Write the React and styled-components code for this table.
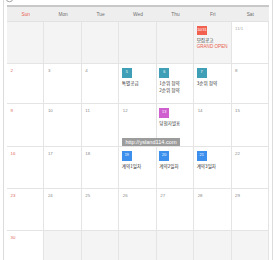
import React from "react";
import styled, { createGlobalStyle } from "styled-components";

const GlobalStyle = createGlobalStyle`
  html, body { margin: 0; padding: 0; background: #ffffff; }
  body {
    font-family: "Liberation Sans", "Noto Sans CJK KR", sans-serif;
    -webkit-font-smoothing: antialiased;
  }
  #root { width: 276px; height: 260px; overflow: hidden; }
`;

const Frame = styled.div`
  margin-left: 3px;
  width: 262px;
  height: 260px;
  padding: 0 3px;
  border-left: 1px solid #dcdcdc;
  border-right: 1px solid #dcdcdc;
`;

const TopBar = styled.div`
  height: 5px;
  display: flex;
  align-items: flex-start;
  overflow: visible;
`;

const Spinner = styled.svg`
  margin-left: -2px;
  margin-top: -6px;
  flex: none;
`;

const Calendar = styled.div`
  position: relative;
  border-top: 2px solid #c8c8c8;
`;

const HeadRow = styled.div`
  display: grid;
  grid-template-columns: repeat(7, 1fr);
  height: 14px;
  background: #eeeeee;
  border-bottom: 1px solid #e2e2e2;
`;

const HeadCell = styled.div`
  display: flex;
  align-items: center;
  justify-content: center;
  font-size: 4.8px;
  color: ${(p) => (p.$sun ? "#e8624f" : "#6f6f6f")};
`;

const Week = styled.div`
  display: grid;
  grid-template-columns: repeat(7, 1fr);
  height: ${(p) => p.$h}px;
  box-sizing: border-box;
  border-bottom: 1px solid #e4e4e4;
`;

const Cell = styled.div`
  box-sizing: border-box;
  padding: 4px 2.5px 0;
  border-right: 1px solid #e4e4e4;
  background: ${(p) => (p.$muted ? "#f4f4f4" : "#ffffff")};
  display: flex;
  flex-direction: column;
  align-items: flex-start;
  min-width: 0;
`;

const DateNum = styled.div`
  margin-left: 1px;
  font-size: 4.4px;
  line-height: 6px;
  color: ${(p) => (p.$sun ? "#e06a5c" : p.$faint ? "#a9a9a9" : "#888888")};
`;

const Badge = styled.div`
  min-width: 10px;
  height: ${(p) => (p.$small ? 9 : 10)}px;
  padding: 0 0.5px;
  box-sizing: border-box;
  display: flex;
  align-items: center;
  justify-content: center;
  background: ${(p) => p.$color};
  color: #ffffff;
  font-size: 3.8px;
  line-height: 1;
  white-space: nowrap;
`;

const Events = styled.div`
  margin-top: 2px;
  display: flex;
  flex-direction: column;
`;

const EventLine = styled.div`
  font-size: 4.6px;
  line-height: 6.5px;
  white-space: nowrap;
  color: ${(p) => (p.$accent ? "#e8604e" : "#333333")};
  font-family: ${(p) =>
    p.$accent
      ? '"Liberation Sans", sans-serif'
      : '"Noto Sans CJK KR", "Liberation Sans", sans-serif'};
`;

const Watermark = styled.div`
  position: absolute;
  left: 115px;
  top: 131px;
  width: 58px;
  height: 8px;
  background: #9c9c9c;
  color: #ffffff;
  font-size: 5.6px;
  line-height: 8px;
  text-align: center;
  white-space: nowrap;
  overflow: hidden;
`;

const TEAL = "#3f9fb6";
const MAGENTA = "#cf5fcf";
const BLUE = "#3d8fee";
const RED = "#f2604f";

const heads = ["Sun", "Mon", "Tue", "Wed", "Thu", "Fri", "Sat"];

const weeks = [
  {
    h: 42,
    days: [
      { muted: true },
      { muted: true },
      { muted: true },
      { muted: true },
      { muted: true },
      {
        muted: true,
        badge: { label: "10/31", color: RED, small: true },
        events: [{ t: "모집공고" }, { t: "GRAND OPEN", accent: true }],
      },
      { label: "11/1", faint: true },
    ],
  },
  {
    h: 40,
    days: [
      { label: "2" },
      { label: "3" },
      { label: "4" },
      { badge: { label: "5", color: TEAL }, events: [{ t: "특별공급" }] },
      {
        badge: { label: "6", color: TEAL },
        events: [{ t: "1순위 청약" }, { t: "2순위 청약" }],
      },
      { badge: { label: "7", color: TEAL }, events: [{ t: "3순위 청약" }] },
      { label: "8" },
    ],
  },
  {
    h: 43,
    days: [
      { label: "9" },
      { label: "10" },
      { label: "11" },
      { label: "12" },
      { badge: { label: "13", color: MAGENTA }, events: [{ t: "당첨자발표" }] },
      { label: "14" },
      { label: "15" },
    ],
  },
  {
    h: 42,
    days: [
      { label: "16" },
      { label: "17" },
      { label: "18" },
      { badge: { label: "19", color: BLUE }, events: [{ t: "계약1일차" }] },
      { badge: { label: "20", color: BLUE }, events: [{ t: "계약2일차" }] },
      { badge: { label: "21", color: BLUE }, events: [{ t: "계약3일차" }] },
      { label: "22" },
    ],
  },
  {
    h: 42,
    days: [
      { label: "23" },
      { label: "24" },
      { label: "25" },
      { label: "26" },
      { label: "27" },
      { label: "28" },
      { label: "29" },
    ],
  },
  {
    h: 40,
    days: [
      { label: "30" },
      { muted: true },
      { muted: true },
      { muted: true },
      { muted: true },
      { muted: true },
      { muted: true },
    ],
  },
];

export default function App() {
  return (
    <>
      <GlobalStyle />
      <Frame>
        <TopBar>
          <Spinner width="9" height="9" viewBox="0 0 9 9">
            <circle cx="4.5" cy="4.5" r="3.3" fill="none" stroke="#9a9a9a" strokeWidth="0.9" />
          </Spinner>
        </TopBar>
        <Calendar>
          <HeadRow>
            {heads.map((h, i) => (
              <HeadCell key={h} $sun={i === 0}>
                {h}
              </HeadCell>
            ))}
          </HeadRow>
          {weeks.map((w, wi) => (
            <Week key={wi} $h={w.h}>
              {w.days.map((d, di) => (
                <Cell key={di} $muted={d.muted}>
                  {d.badge ? (
                    <Badge $color={d.badge.color} $small={d.badge.small}>
                      {d.badge.label}
                    </Badge>
                  ) : d.label ? (
                    <DateNum $sun={di === 0} $faint={d.faint}>
                      {d.label}
                    </DateNum>
                  ) : null}
                  {d.events && (
                    <Events>
                      {d.events.map((e, ei) => (
                        <EventLine key={ei} $accent={e.accent}>
                          {e.t}
                        </EventLine>
                      ))}
                    </Events>
                  )}
                </Cell>
              ))}
            </Week>
          ))}
          <Watermark>http://ysland114.com</Watermark>
        </Calendar>
      </Frame>
    </>
  );
}
